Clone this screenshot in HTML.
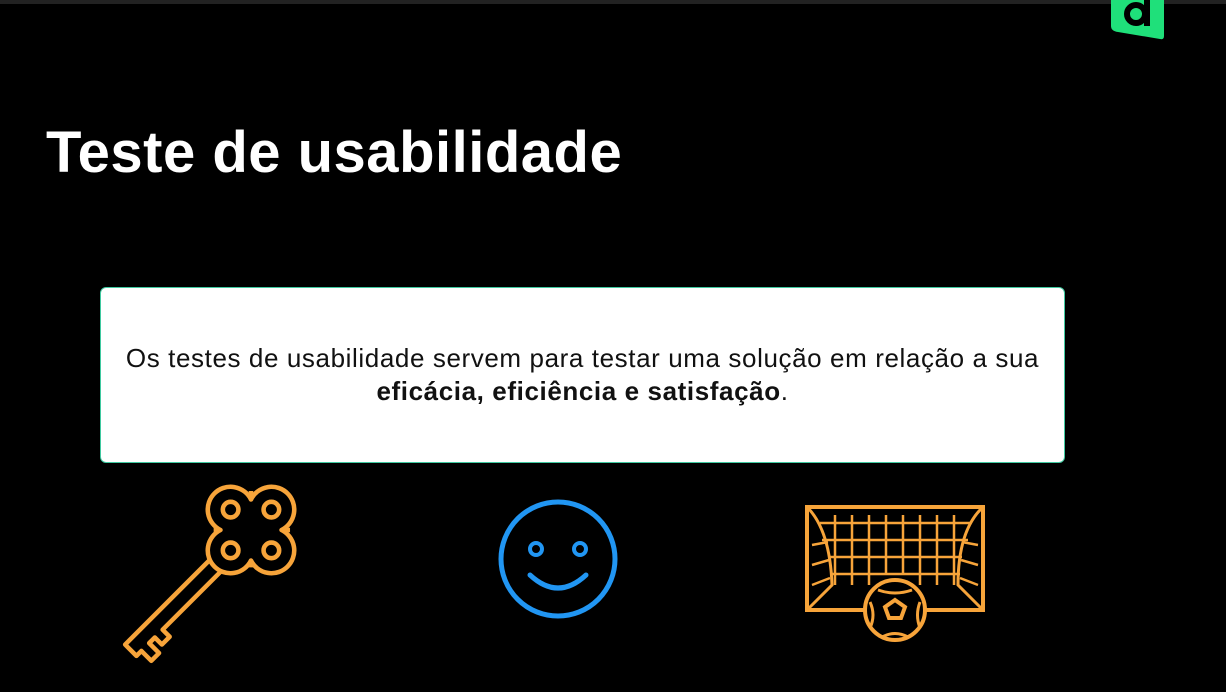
<!DOCTYPE html>
<html><head><meta charset="utf-8"><style>
body{margin:0;width:1226px;height:692px;background:#000;overflow:hidden;position:relative;font-family:"Liberation Sans",sans-serif}
.top{position:absolute;left:0;top:0;width:1226px;height:4px;background:#222}
h1{position:absolute;left:46px;top:119px;margin:0;color:#fff;font-size:58px;font-weight:bold;letter-spacing:0.5px}
.box{position:absolute;left:100px;top:287px;width:965px;height:176px;background:#fff;border:1px solid #3fc9a0;border-radius:6px;box-sizing:border-box;text-align:center;font-size:26px;line-height:33px;color:#111;padding-top:54px;letter-spacing:0.6px;white-space:nowrap}
svg{position:absolute}
</style></head><body>
<div class="top"></div>
<svg style="left:1108px;top:0" width="60" height="42" viewBox="0 0 60 42"><path d="M3 0 H56 V36 Q56 40 52 39 L10 32 Q3 31 3 26 Z" fill="#1fe07a"/><circle cx="28" cy="14" r="9" fill="none" stroke="#000" stroke-width="6"/><rect x="36" y="0" width="6" height="26" fill="#000"/></svg>
<h1>Teste de usabilidade</h1>
<div class="box">Os testes de usabilidade servem para testar uma solução em relação a sua<br><b>eficácia, eficiência e satisfação</b>.</div>
<svg style="left:0;top:0" width="400" height="692" viewBox="0 0 400 692" fill="none" stroke="#f7a43a" stroke-width="4.5" stroke-linejoin="round">
<g transform="translate(251,530) rotate(135)">
<path d="M40 8 L170 8 L170 -8 L163 -8 L163 -22 L152 -22 L152 -8 L144 -8 L144 -18 L133 -18 L133 -8 L40 -8"/>
<g transform="scale(1.2)">
<path d="M18 -18 A19 19 0 1 1 18 18 A19 19 0 1 1 -18 18 A19 19 0 1 1 -18 -18 A19 19 0 1 1 18 -18 Z" fill="#000" stroke-width="3.8"/>
<path d="M-18 18 L-23 23 M-18 -18 L-23 -23 M18 -18 L22 -22 M18 18 L22 22" stroke-width="3.8"/>
<g stroke-width="3.8"><circle cx="24" cy="0" r="6.5"/><circle cx="-24" cy="0" r="6.5"/><circle cx="0" cy="24" r="6.5"/><circle cx="0" cy="-24" r="6.5"/></g>
</g>
</g>
</svg>
<svg style="left:496px;top:497px" width="124" height="124" viewBox="0 0 124 124"><circle cx="62" cy="62" r="57" fill="none" stroke="#2196f3" stroke-width="5"/><circle cx="40" cy="52" r="6" fill="none" stroke="#2196f3" stroke-width="4"/><circle cx="84" cy="52" r="6" fill="none" stroke="#2196f3" stroke-width="4"/><path d="M34 78 Q62 104 90 78" fill="none" stroke="#2196f3" stroke-width="5" stroke-linecap="round"/></svg>
<svg style="left:790px;top:490px" width="210" height="160" viewBox="0 0 210 160" fill="none" stroke="#f7a43a" stroke-width="4">
<path d="M75 120 H17 V17 H193 V120 H135"/>
<path d="M17 17 Q40 40 42 95 L17 120 M193 17 Q168 40 168 95 L193 120" stroke-width="3"/>
<g stroke-width="2.5"><path d="M45 25 V95 M62 25 V95 M79 25 V95 M96 25 V85 M113 25 V85 M130 25 V95 M147 25 V95 M164 25 V95"/><path d="M30 33 H180 M32 50 H178 M38 67 H172 M40 84 H170"/><path d="M22 55 L38 52 M22 75 L39 70 M22 95 L40 88 M188 55 L172 52 M188 75 L171 70 M188 95 L170 88"/></g>
<circle cx="105" cy="120" r="30" fill="#000"/><path d="M105 110 L115 117 L111 128 L99 128 L95 117 Z"/>
<path d="M88 100 Q105 106 122 100 M130 112 Q125 125 130 138 M80 112 Q86 125 80 138 M92 147 Q105 140 118 147" stroke-width="3"/>
</svg>
</body></html>
